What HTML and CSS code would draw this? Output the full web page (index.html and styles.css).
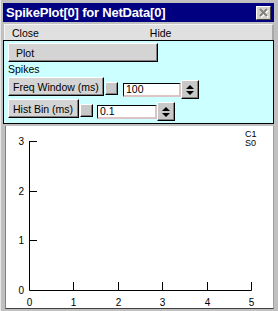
FILE: index.html
```html
<!DOCTYPE html>
<html>
<head>
<meta charset="utf-8">
<link rel="stylesheet" href="styles.css">
</head>
<body>
<div class="window">
  <div class="titlebar">
    <span class="title">SpikePlot[0] for NetData[0]</span>
    <span class="closebtn"><svg width="11" height="10" viewBox="0 0 11 10"><path d="M2 1 L9 8 M9 1 L2 8" stroke="#fff" stroke-width="2" transform="translate(1,1)"/><path d="M2 1 L9 8 M9 1 L2 8" stroke="#808080" stroke-width="2"/></svg></span>
  </div>
  <div class="menubar">
    <span class="menu-close">Close</span>
    <span class="menu-hide">Hide</span>
  </div>
  <div class="panel">
    <div class="btn btn-plot">Plot</div>
    <div class="label">Spikes</div>
    <div class="row">
      <div class="btn btn-freq">Freq Window (ms)</div>
      <div class="sq sq-1"></div>
      <div class="field field-1">100</div>
      <div class="spin"><svg width="10" height="12" viewBox="0 0 10 12"><path d="M1 5 L9 5 L5 1 Z" fill="#000"/><path d="M1 7 L9 7 L5 11 Z" fill="#000"/></svg></div>
    </div>
    <div class="row">
      <div class="btn btn-hist">Hist Bin (ms)</div>
      <div class="sq sq-2"></div>
      <div class="field field-2">0.1</div>
      <div class="spin"><svg width="10" height="12" viewBox="0 0 10 12"><path d="M1 5 L9 5 L5 1 Z" fill="#000"/><path d="M1 7 L9 7 L5 11 Z" fill="#000"/></svg></div>
    </div>
  </div>
  <div class="plot">
    <svg class="chart" width="267" height="182" viewBox="0 0 267 182">
      <g stroke="#000" stroke-width="1" fill="none">
        <path d="M23.5 15 V164.5 H245.5"/>
        <path d="M23.5 15.5 H31"/>
        <path d="M23.5 65.5 H31"/>
        <path d="M23.5 114.5 H31"/>
        <path d="M67.5 164 V156"/>
        <path d="M112.5 164 V156"/>
        <path d="M156.5 164 V156"/>
        <path d="M201.5 164 V156"/>
        <path d="M245.5 164.5 V156"/>
      </g>
      <g class="ylab" text-anchor="end">
        <text x="18" y="19">3</text>
        <text x="18" y="69">2</text>
        <text x="18" y="118">1</text>
        <text x="18" y="168">0</text>
      </g>
      <g class="xlab" text-anchor="middle">
        <text x="23.5" y="180">0</text>
        <text x="67.5" y="180">1</text>
        <text x="112.5" y="180">2</text>
        <text x="156.5" y="180">3</text>
        <text x="201.5" y="180">4</text>
        <text x="245.5" y="180">5</text>
      </g>
      <g class="legend">
        <text x="239" y="11">C1</text>
        <text x="239" y="20">S0</text>
      </g>
    </svg>
  </div>
</div>
</body>
</html>
```
FILE: styles.css
```css
html, body {
  margin: 0;
  padding: 0;
}
body {
  width: 278px;
  height: 311px;
  overflow: hidden;
  background: #c0c0c0;
  font-family: "Liberation Sans", Arial, sans-serif;
  font-size: 10.5px;
  color: #000;
}
.window {
  box-sizing: border-box;
  width: 278px;
  height: 311px;
  padding: 3px 4px 0 2px;
  display: flex;
  flex-direction: column;
  border-left: 1px solid #e8e8e8;
}
.titlebar {
  height: 19px;
  background: #000080;
  color: #fff;
  display: flex;
  align-items: center;
  justify-content: space-between;
  padding: 0 3px 0 3px;
}
.title {
  font-weight: bold;
  font-size: 13px;
  letter-spacing: -0.2px;
}
.closebtn {
  width: 15px;
  height: 14px;
  box-sizing: border-box;
  background: #d4d0c8;
  border-top: 1px solid #fff;
  border-left: 1px solid #fff;
  border-right: 1px solid #404040;
  border-bottom: 1px solid #404040;
  display: flex;
  align-items: center;
  justify-content: center;
}
.menubar {
  margin-top: 2px;
  margin-left: 1px;
  height: 16px;
  box-sizing: border-box;
  background: #e0e0e0;
  border-top: 1px solid #f4f4f4;
  border-left: 1px solid #f4f4f4;
  border-right: 2px solid #a8a8a8;
  display: flex;
  align-items: center;
  font-size: 10.5px;
}
.menu-close {
  margin-left: 7px;
}
.menu-hide {
  margin-left: 111px;
}
.panel {
  height: 84px;
  box-sizing: border-box;
  background: #ccffff;
  border: 1px solid #000;
  padding: 2px 0 0 4px;
  display: flex;
  flex-direction: column;
}
.btn {
  box-sizing: border-box;
  height: 19px;
  background: #d4d4d4;
  border-top: 1px solid #fff;
  border-left: 1px solid #fff;
  border-right: 1px solid #000;
  border-bottom: 1px solid #000;
  box-shadow: inset -1px -1px 0 #808080;
  display: flex;
  align-items: center;
  padding-left: 6px;
  flex: none;
}
.btn-plot {
  width: 150px;
  padding-left: 7px;
}
.label {
  height: 15px;
  line-height: 14px;
}
.row {
  height: 22px;
  display: flex;
  align-items: flex-start;
}
.btn-freq {
  width: 96px;
  padding-left: 4px;
}
.btn-hist {
  width: 71px;
  padding-left: 4px;
}
.sq {
  box-sizing: border-box;
  width: 13px;
  height: 13px;
  margin-top: 5px;
  margin-left: 1px;
  background: #c8c8c8;
  border-top: 1px solid #fff;
  border-left: 1px solid #fff;
  border-right: 1px solid #000;
  border-bottom: 1px solid #000;
  box-shadow: inset -1px -1px 0 #808080;
  flex: none;
}
.field {
  box-sizing: border-box;
  height: 14px;
  margin-top: 6px;
  background: #fff;
  border-top: 1px solid #000;
  border-left: 1px solid #000;
  border-right: 2px solid #dcc4c4;
  border-bottom: 2px solid #dcc4c4;
  line-height: 11px;
  padding-left: 2px;
  flex: none;
}
.field-1 {
  width: 58px;
  margin-left: 5px;
}
.field-2 {
  width: 60px;
  margin-left: 4px;
}
.spin {
  box-sizing: border-box;
  width: 18px;
  height: 19px;
  margin-top: 3px;
  background: #c8c8c8;
  border-top: 1px solid #fff;
  border-left: 1px solid #fff;
  border-right: 1px solid #000;
  border-bottom: 1px solid #000;
  box-shadow: inset -1px -1px 0 #808080;
  display: flex;
  align-items: center;
  justify-content: center;
  flex: none;
}
.plot {
  margin-top: 2px;
  margin-left: 2px;
  height: 183px;
  box-sizing: border-box;
  background: #fff;
  border-left: 1px solid #808080;
  border-right: 1px solid #a0a0a0;
  border-bottom: 1px solid #404040;
  flex: none;
}
.chart {
  display: block;
}
.chart text {
  font-family: "Liberation Sans", Arial, sans-serif;
  font-size: 10px;
  fill: #000;
}
.chart .legend text {
  font-size: 9px;
}
```
